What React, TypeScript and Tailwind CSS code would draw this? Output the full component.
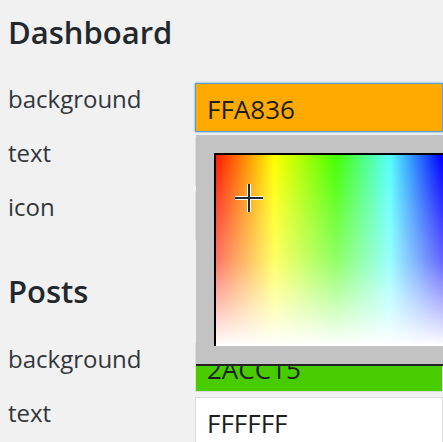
import React from 'react';

interface FieldProps {
  label: string;
  value: string;
  bg: string;
  focused?: boolean;
}

// one label + colour input row of the settings table
const Field: React.FC<FieldProps> = ({ label, value, bg, focused }) => (
  <div className="flex h-[49px] mb-[5px]">
    <div className="w-[187px] shrink-0 pt-[4px] text-[24px] leading-[24px] text-[#32373c]">{label}</div>
    <div
      className={`flex-1 h-[49px] border pl-[11px] pt-[9px] text-[26px] leading-[32px] text-[#1e1e1e] ${
        focused ? 'border-[#5b9dd9] shadow-[0_0_2px_rgba(30,140,190,0.8)]' : 'border-[#dddddd]'
      }`}
      style={{ backgroundColor: bg }}
    >
      {value}
    </div>
  </div>
);

const Heading: React.FC<{ children: React.ReactNode; className?: string }> = ({ children, className }) => (
  <h2 className={`h-[30px] text-[31px] leading-[30px] font-semibold text-[#23282d] ${className ?? ''}`}>{children}</h2>
);

export default function App() {
  return (
    <div
      className="relative w-[443px] h-[442px] overflow-hidden bg-[#f1f1f1] pl-[8px]"
      style={{ fontFamily: '"Open Sans", "Noto Sans", sans-serif' }}
    >
      <Heading className="mt-[17px] mb-[36px]">Dashboard</Heading>
      <Field label="background" value="FFA836" bg="#ffaa00" focused />
      <Field label="text" value="FFFFFF" bg="#ffffff" />
      <Field label="icon" value="FFFFFF" bg="#ffffff" />

      <Heading className="mt-[36px] mb-[37px]">Posts</Heading>
      <Field label="background" value="2ACC15" bg="#48cc00" />
      <Field label="text" value="FFFFFF" bg="#ffffff" />

      {/* colour picker popup */}
      <div className="absolute left-[196px] top-[135px] w-[300px] h-[231px] bg-[#c3c3c3] border-b-2 border-[#222]">
        <div className="absolute left-[18px] top-[18px] w-[340px] h-[193px] border-t-2 border-l-2 border-black overflow-hidden">
          <div className="absolute inset-0 bg-[linear-gradient(to_right,#ff1a00_0px,#ffff00_58px,#44ff00_120px,#55ffff_174px,#0000ff_226px,#ff00ff_280px,#ff0000_335px)]" />
          <div className="absolute inset-0 bg-[linear-gradient(to_bottom,rgba(255,255,255,0)_0%,rgba(255,255,255,0.4)_55%,rgba(255,255,255,1)_100%)]" />
          <svg className="absolute left-[17px] top-[27px]" width="32" height="32" viewBox="0 0 32 32">
            <path d="M16 2v28M2 16h28" stroke="#fff" strokeWidth="4" />
            <path d="M16 2v28M2 16h28" stroke="#1e2a38" strokeWidth="2" />
          </svg>
        </div>
      </div>
    </div>
  );
}
